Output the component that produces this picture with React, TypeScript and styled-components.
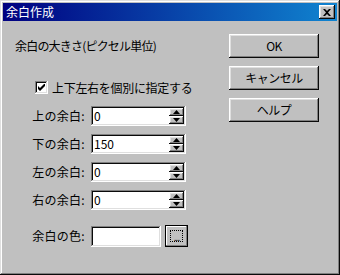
import styled, { createGlobalStyle } from 'styled-components';

const GlobalStyle = createGlobalStyle`
    html, body {
        margin: 0;
        padding: 0;
        background: #c0c0c0;
    }
    * {
        box-sizing: border-box;
    }
`

const font = `"Noto Sans CJK JP", "Liberation Sans", sans-serif`

const raised = `
    box-shadow: inset -1px -1px #0a0a0a, inset 1px 1px #ffffff,
        inset -2px -2px #808080, inset 2px 2px #dfdfdf;
`
const sunken = `
    box-shadow: inset -1px -1px #ffffff, inset 1px 1px #808080,
        inset -2px -2px #dfdfdf, inset 2px 2px #0a0a0a;
`

const margins = [
    {label: '上の余白:', value: '0'},
    {label: '下の余白:', value: '150'},
    {label: '左の余白:', value: '0'},
    {label: '右の余白:', value: '0'},
]

const buttons = ['OK', 'キャンセル', 'ヘルプ']

const Arrow = ({up}: {up?: boolean}) => (
    <svg width={7} height={4} viewBox="0 0 7 4">
        {up
            ? <path d="M3.5 0 L7 4 L0 4 Z" fill="#000"/>
            : <path d="M0 0 L7 0 L3.5 4 Z" fill="#000"/>}
    </svg>
)

export default function App() {
    return (
        <>
            <GlobalStyle/>
            <Window>
                <TitleBar>
                    <Title>余白作成</Title>
                    <CloseButton>
                        <svg width={8} height={7} viewBox="0 0 8 7">
                            <path d="M0 0 H2 L4 2 L6 0 H8 L5 3.5 L8 7 H6 L4 5 L2 7 H0 L3 3.5 Z" fill="#000"/>
                        </svg>
                    </CloseButton>
                </TitleBar>
                <Body>
                    <LeftColumn>
                        <Heading>余白の大きさ(ピクセル単位)</Heading>
                        <CheckRow>
                            <CheckBox>
                                <svg width={7} height={7} viewBox="0 0 7 7">
                                    <path d="M0 2 L2 4 L7 -1 L7 2 L2 7 L0 5 Z" fill="#000"/>
                                </svg>
                            </CheckBox>
                            <span>上下左右を個別に指定する</span>
                        </CheckRow>
                        <MarginGrid>
                            {margins.map((m, i) => (
                                <MarginRow key={i}>
                                    <FieldLabel>{m.label}</FieldLabel>
                                    <SpinField>
                                        <SpinText>{m.value}</SpinText>
                                        <SpinButtons>
                                            <SpinButton><Arrow up/></SpinButton>
                                            <SpinButton><Arrow/></SpinButton>
                                        </SpinButtons>
                                    </SpinField>
                                </MarginRow>
                            ))}
                        </MarginGrid>
                        <ColorRow>
                            <FieldLabel>余白の色:</FieldLabel>
                            <ColorBox/>
                            <BrowseButton>
                                <FocusRect>...</FocusRect>
                            </BrowseButton>
                        </ColorRow>
                    </LeftColumn>
                    <RightColumn>
                        {buttons.map((b) => (
                            <PushButton key={b}>{b}</PushButton>
                        ))}
                    </RightColumn>
                </Body>
            </Window>
        </>
    );
}

const Window = styled.div`
    width: 340px;
    height: 275px;
    padding: 3px;
    background: #c0c0c0;
    font-family: ${font};
    font-size: 12px;
    color: #000;
    box-shadow: inset -1px -1px #0a0a0a, inset 1px 1px #dfdfdf,
        inset -2px -2px #808080, inset 2px 2px #ffffff;
    display: flex;
    flex-direction: column;
`
const TitleBar = styled.div`
    height: 18px;
    display: flex;
    align-items: center;
    justify-content: space-between;
    padding: 0 2px 0 3px;
    background: linear-gradient(90deg, #000080, #1084d0);
`
const Title = styled.span`
    color: #fff;
    font-size: 12px;
    line-height: 14px;
`
const CloseButton = styled.div`
    width: 16px;
    height: 14px;
    background: #c0c0c0;
    ${raised};
    display: flex;
    align-items: center;
    justify-content: center;
    padding-right: 1px;
`
const Body = styled.div`
    flex: 1;
    display: flex;
    justify-content: space-between;
    padding: 0 18px 0 12px;
`
const LeftColumn = styled.div`
    display: flex;
    flex-direction: column;
`
const Heading = styled.div`
    margin-top: 18px;
    line-height: 14px;
    letter-spacing: -0.8px;
`
const CheckRow = styled.div`
    margin-top: 28px;
    margin-left: 20px;
    height: 13px;
    display: flex;
    align-items: center;
    gap: 4px;
    line-height: 14px;
    letter-spacing: -0.3px;
`
const CheckBox = styled.div`
    width: 13px;
    height: 13px;
    background: #fff;
    ${sunken};
    display: flex;
    align-items: center;
    justify-content: center;
`
const MarginGrid = styled.div`
    margin-top: 12px;
    display: flex;
    flex-direction: column;
    gap: 8px;
`
const MarginRow = styled.div`
    display: flex;
    align-items: center;
    gap: 6px;
`
const FieldLabel = styled.span`
    width: 70px;
    text-align: right;
    line-height: 14px;
    letter-spacing: 0.3px;
`
const SpinField = styled.div`
    width: 95px;
    height: 20px;
    padding: 2px;
    background: #fff;
    ${sunken};
    display: flex;
`
const SpinText = styled.div`
    flex: 1;
    padding-left: 1px;
    line-height: 16px;
`
const SpinButtons = styled.div`
    width: 15px;
    display: flex;
    flex-direction: column;
`
const SpinButton = styled.div`
    height: 8px;
    background: #c0c0c0;
    ${raised};
    display: flex;
    align-items: center;
    justify-content: center;
`
const ColorRow = styled.div`
    margin-top: 15px;
    height: 22px;
    display: flex;
    align-items: center;
    gap: 6px;
`
const ColorBox = styled.div`
    width: 70px;
    height: 21px;
    margin-top: 1px;
    margin-right: -2px;
    background: #fff;
    ${sunken};
`
const BrowseButton = styled.div`
    width: 23px;
    height: 22px;
    padding: 4px;
    background: #c0c0c0;
    border: 1px solid #000;
    box-shadow: inset -1px -1px #808080, inset 1px 1px #ffffff;
    display: flex;
`
const FocusRect = styled.div`
    flex: 1;
    border: 1px dotted #000;
    display: flex;
    align-items: flex-end;
    justify-content: center;
    font-size: 10px;
    line-height: 9px;
    letter-spacing: -1px;
`
const RightColumn = styled.div`
    margin-top: 13px;
    display: flex;
    flex-direction: column;
    gap: 8px;
`
const PushButton = styled.div`
    width: 90px;
    height: 24px;
    background: #c0c0c0;
    ${raised};
    display: flex;
    align-items: center;
    justify-content: center;
    line-height: 14px;
    letter-spacing: -0.5px;
`
